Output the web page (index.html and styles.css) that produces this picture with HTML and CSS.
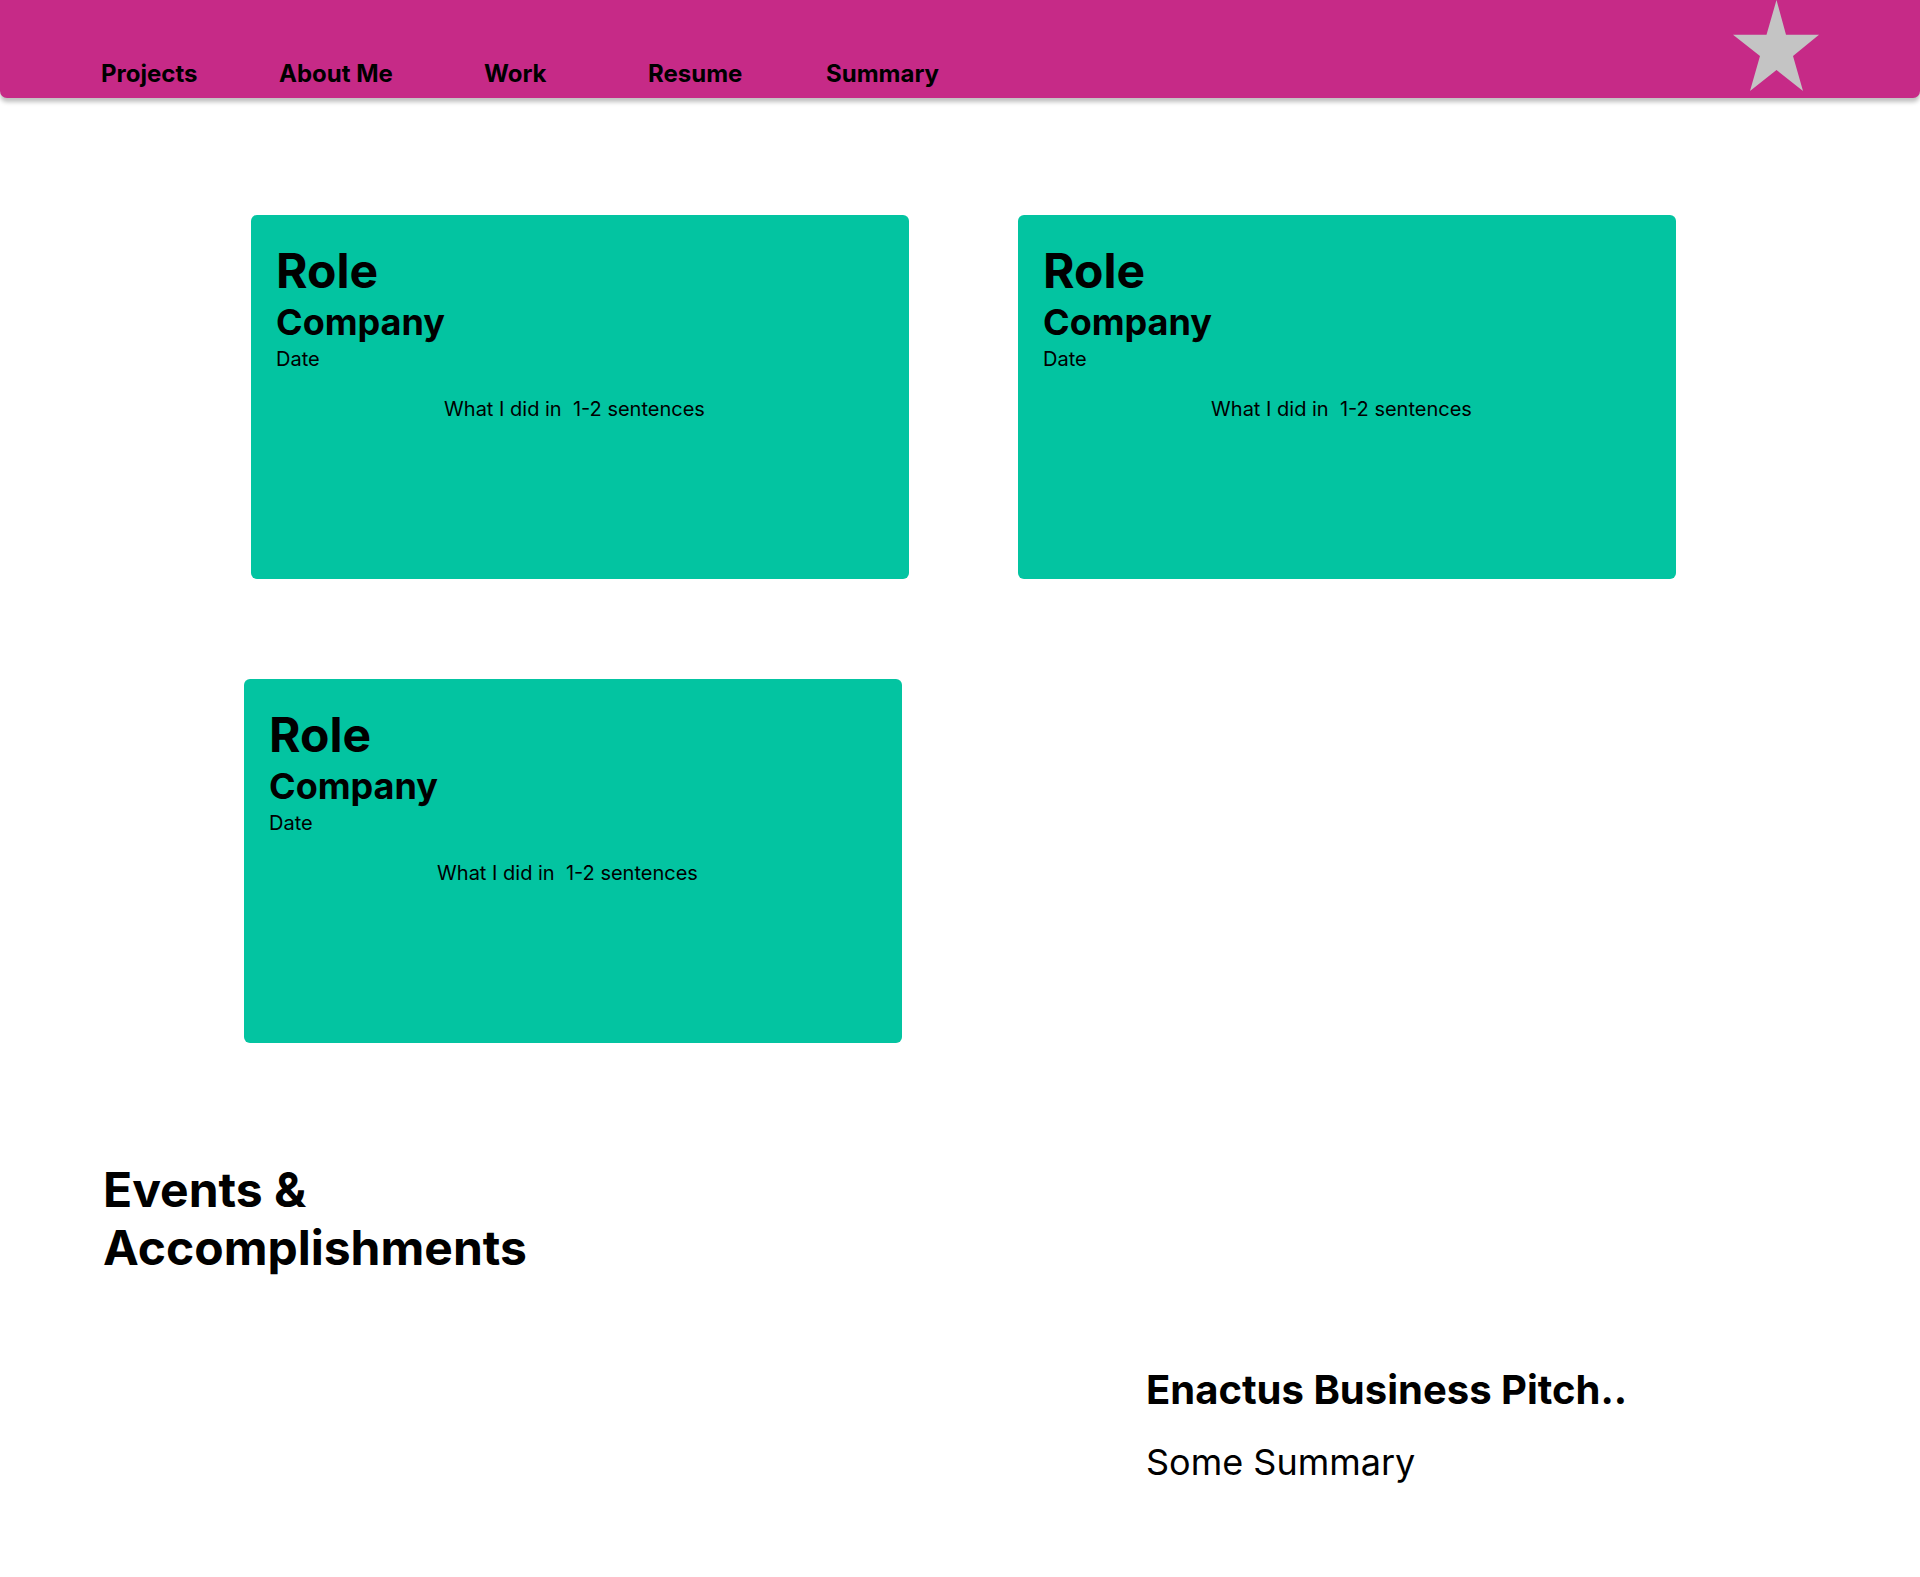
FILE: index.html
```html
<!DOCTYPE html>
<html lang="en">
<head>
<meta charset="utf-8">
<title>Portfolio</title>
<link rel="stylesheet" href="styles.css">
</head>
<body>
<header class="topbar">
  <nav class="nav">
    <a class="nav-link" href="#">Projects</a>
    <a class="nav-link" href="#">About Me</a>
    <a class="nav-link" href="#">Work</a>
    <a class="nav-link" href="#">Resume</a>
    <a class="nav-link" href="#">Summary</a>
  </nav>
  <svg class="star" width="86" height="91" viewBox="0 0 86 91" aria-hidden="true">
    <polygon points="43.5,0 53,34.7 86,34.7 60,56 70,91 43.5,70 17,91 27,56 0,34.7 33.5,34.7" fill="#C4C4C4"/>
  </svg>
</header>

<main class="main">
  <section class="work">
    <div class="card-row row-first">
      <article class="card">
        <h2 class="role">Role</h2>
        <h3 class="company">Company</h3>
        <p class="date">Date</p>
        <p class="desc">What I did in&nbsp; 1-2 sentences</p>
      </article>
      <article class="card">
        <h2 class="role">Role</h2>
        <h3 class="company">Company</h3>
        <p class="date">Date</p>
        <p class="desc">What I did in&nbsp; 1-2 sentences</p>
      </article>
    </div>
    <div class="card-row row-second">
      <article class="card">
        <h2 class="role">Role</h2>
        <h3 class="company">Company</h3>
        <p class="date">Date</p>
        <p class="desc">What I did in&nbsp; 1-2 sentences</p>
      </article>
    </div>
  </section>

  <section class="events">
    <h2 class="events-title">Events &amp; Accomplishments</h2>
    <div class="event">
      <h3 class="event-title">Enactus Business Pitch..</h3>
      <p class="event-summary">Some Summary</p>
    </div>
  </section>
</main>
</body>
</html>
```

FILE: styles.css
```css
* {
  box-sizing: border-box;
}

html, body {
  margin: 0;
  padding: 0;
  background: #ffffff;
}

body {
  font-family: Inter, "Noto Sans", "Liberation Sans", sans-serif;
  color: #000000;
  min-height: 1577px;
}

/* Header */
.topbar {
  height: 98px;
  background: #C62A87;
  border-radius: 0 0 7px 7px;
  box-shadow: 0 4px 4px rgba(0, 0, 0, 0.25);
  display: flex;
  justify-content: space-between;
  align-items: flex-start;
  padding: 0 101px 0 101px;
}

.nav {
  display: grid;
  grid-template-columns: 178px 205px 164px 178px auto;
  padding-top: 59px;
}

.nav-link {
  font-size: 24px;
  font-weight: 700;
  line-height: normal;
  color: #000000;
  text-decoration: none;
}

.star {
  display: block;
}

/* Work cards */
.work {
  padding-top: 117px;
}

.card-row {
  display: flex;
  gap: 109px;
}

.row-first {
  padding-left: 251px;
}

.row-second {
  padding-left: 244px;
  margin-top: 100px;
}

.card {
  width: 658px;
  height: 364px;
  background: #03C4A1;
  border-radius: 6px;
  padding: 26px 26px 0 25px;
}

.role {
  margin: 0;
  font-size: 48px;
  font-weight: 700;
  line-height: normal;
}

.company {
  margin: 0;
  font-size: 36px;
  font-weight: 700;
  line-height: normal;
}

.date {
  margin: 3px 0 0;
  font-size: 20px;
  font-weight: 400;
  line-height: normal;
}

.desc {
  margin: 26px 0 0;
  font-size: 20px;
  font-weight: 400;
  line-height: normal;
  text-align: center;
  padding-right: 10px;
}

/* Events */
.events {
  display: flex;
  padding: 118px 0 0 103px;
}

.events-title {
  margin: 0;
  width: 460px;
  font-size: 48px;
  font-weight: 700;
  line-height: 58px;
}

.event {
  margin: 204px 0 0 583px;
}

.event-title {
  margin: 0;
  font-size: 40px;
  font-weight: 700;
  line-height: normal;
}

.event-summary {
  margin: 26px 0 0;
  font-size: 36px;
  font-weight: 400;
  line-height: normal;
}
```
